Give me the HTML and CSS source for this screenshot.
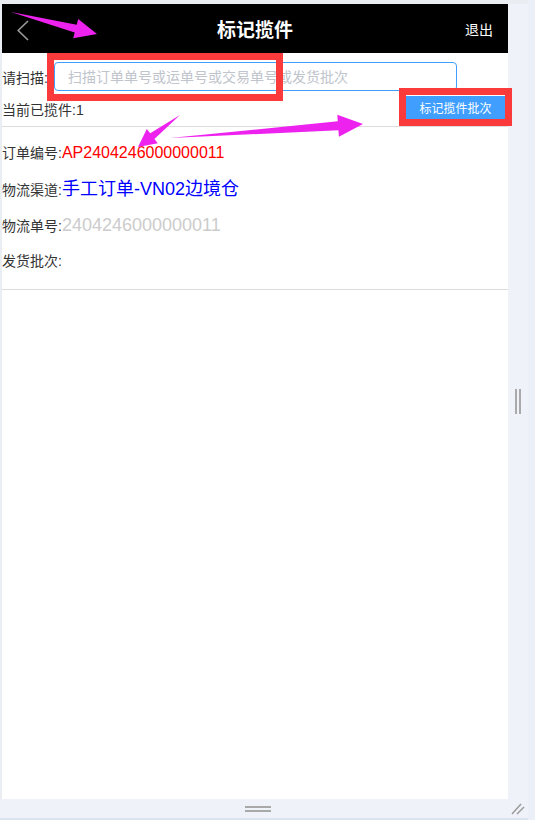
FILE: index.html
```html
<!DOCTYPE html>
<html lang="zh-CN">
<head>
<meta charset="utf-8">
<title>标记揽件</title>
<link rel="stylesheet" href="styles.css">
</head>
<body>
<div class="frame">
  <div class="main-row">
    <div class="app">
      <header class="topbar">
        <span class="back"><svg width="12" height="21" viewBox="0 0 12 21"><polyline points="11,1 1.2,10.5 11,20" fill="none" stroke="#9a9a9a" stroke-width="1.6"/></svg></span>
        <h1 class="title">标记揽件</h1>
        <span class="logout">退出</span>
      </header>
      <div class="scan">
        <label class="scan-label" for="scan">请扫描:</label>
        <input id="scan" class="scan-input" type="text" placeholder="扫描订单单号或运单号或交易单号或发货批次">
      </div>
      <div class="count-row">
        <span class="count">当前已揽件:1</span>
        <button class="mark-btn" type="button">标记揽件批次</button>
      </div>
      <div class="info">
        <div class="info-row"><span class="k">订单编号:</span><span class="v v-red">AP2404246000000011</span></div>
        <div class="info-row"><span class="k">物流渠道:</span><span class="v v-blue">手工订单-VN02边境仓</span></div>
        <div class="info-row"><span class="k">物流单号:</span><span class="v v-gray">2404246000000011</span></div>
        <div class="info-row"><span class="k">发货批次:</span></div>
      </div>
    </div>
    <div class="vbar"><span class="grip-v"></span></div>
  </div>
  <div class="hbar">
    <div class="hbar-main"><span class="grip-h"></span></div>
    <div class="corner"><svg width="20" height="19" viewBox="0 0 20 19"><line x1="4" y1="15" x2="13" y2="5" stroke="#999" stroke-width="1.4"/><line x1="9" y1="15" x2="16" y2="8" stroke="#999" stroke-width="1.4"/></svg></div>
  </div>
</div>
<svg class="annot" width="535" height="820" viewBox="0 0 535 820">
  <rect x="50.5" y="56.5" width="229" height="41" fill="none" stroke="#fb3a3b" stroke-width="7"/>
  <rect x="402.5" y="91.5" width="106" height="31" fill="none" stroke="#fb3a3b" stroke-width="7"/>
  <polygon fill="#ee22ee" points="11,12 76.7,24.7 78.2,18.9 97,34 73.2,38.2 74.7,32.4"/>
  <polygon fill="#ee22ee" points="180,115 154.4,138.9 157.8,143.3 138,147 146.8,128.9 150.2,133.3"/>
  <polygon fill="#ee22ee" points="170,138 337.8,121.3 337.3,114.8 363,124 338.9,136.8 338.4,130.3"/>
</svg>
</body>
</html>
```
FILE: styles.css
```css
html, body {
  margin: 0;
  padding: 0;
}
body {
  width: 535px;
  height: 820px;
  background: #ebeff8;
  font-family: "Liberation Sans", "Noto Sans CJK SC", sans-serif;
  color: #333;
  position: relative;
  overflow: hidden;
}
.frame {
  width: 528px;
  background: #eff2f8;
  border-bottom: 2px solid #dbe3f2;
}
.main-row {
  display: flex;
  padding-top: 4px;
  padding-left: 2px;
  background: #eaeef3;
}
.app {
  width: 506px;
  height: 795px;
  background: #fff;
}
.vbar {
  width: 20px;
  background: #eff2f8;
  display: flex;
  align-items: center;
}
.grip-v {
  margin-left: 7px;
  width: 2px;
  height: 25px;
  border-left: 2px solid #a9a9a9;
  border-right: 2px solid #a9a9a9;
}
.hbar {
  display: flex;
  height: 19px;
}
.hbar-main {
  width: 506px;
  margin-left: 2px;
  display: flex;
  align-items: center;
  justify-content: center;
}
.grip-h {
  width: 26px;
  height: 2px;
  border-top: 2px solid #a9a9a9;
  border-bottom: 2px solid #a9a9a9;
  margin-left: 6px;
}
.corner {
  width: 20px;
  height: 19px;
}
.corner svg {
  display: block;
}
.topbar {
  height: 49px;
  background: #000;
  display: grid;
  grid-template-columns: 1fr auto 1fr;
  align-items: center;
  padding: 0 15px;
}
.back svg {
  display: block;
  margin-top: 4px;
}
.title {
  margin: 0;
  color: #fff;
  font-size: 19px;
  font-weight: bold;
  font-family: "Noto Sans CJK SC", sans-serif;
  line-height: 1;
}
.logout {
  justify-self: end;
  color: #fff;
  font-size: 14px;
  font-family: "Noto Sans CJK SC", sans-serif;
}
.scan {
  margin-top: 9px;
  display: flex;
  align-items: center;
  height: 29px;
}
.scan-label {
  width: 52px;
  font-size: 14px;
}
.scan-input {
  box-sizing: border-box;
  width: 403px;
  height: 29px;
  border: 1px solid #409eff;
  border-radius: 4px;
  padding: 0 0 0 13px;
  font-size: 14px;
  font-family: "Liberation Sans", "Noto Sans CJK SC", sans-serif;
  outline: none;
  color: #333;
}
.scan-input::placeholder {
  color: #c0c4cc;
}
.count-row {
  margin-top: 5px;
  display: flex;
  justify-content: space-between;
  align-items: center;
  padding: 0 3px 7px 0;
  border-bottom: 1px solid #dcdcdc;
}
.count {
  font-size: 14px;
  padding-top: 2px;
}
.mark-btn {
  width: 99px;
  height: 23px;
  border: none;
  border-radius: 0;
  background: #409eff;
  color: #fff;
  font-size: 12px;
  font-family: "Liberation Sans", "Noto Sans CJK SC", sans-serif;
  padding: 0;
}
.info {
  padding: 8px 0 10px;
  border-bottom: 1px solid #dcdcdc;
}
.info-row {
  height: 36px;
  line-height: 36px;
  white-space: nowrap;
}
.k {
  font-size: 14px;
  color: #333;
}
.v-red {
  font-size: 16px;
  color: #ff0000;
}
.v-blue {
  font-size: 18px;
  color: #0000ff;
}
.v-gray {
  font-size: 18px;
  color: #cccccc;
}
.annot {
  position: absolute;
  top: 0;
  left: 0;
  pointer-events: none;
}
```
